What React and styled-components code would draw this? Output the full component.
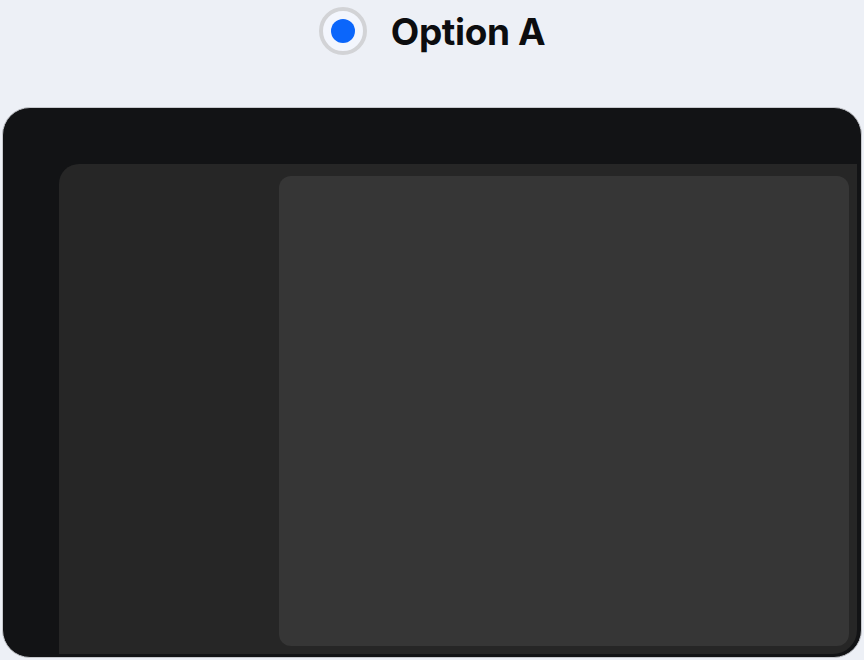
import React from "react";
import styled, { createGlobalStyle } from "styled-components";

const GlobalStyle = createGlobalStyle`
  html, body {
    margin: 0;
    padding: 0;
    background: #edf0f6;
    font-family: Inter, "Noto Sans", sans-serif;
  }
`;

function App() {
  return (
    <>
      <GlobalStyle />
      <Page>
        <Header>
          <Radio>
            <Dot />
          </Radio>
          <Label>Option A</Label>
        </Header>
        <Frame>
          <Window>
            <Pane />
          </Window>
        </Frame>
      </Page>
    </>
  );
}

const Page = styled.div`
  width: 864px;
  height: 660px;
  display: flex;
  flex-direction: column;
  overflow: hidden;
`;

const Header = styled.div`
  height: 62px;
  display: flex;
  align-items: center;
  justify-content: center;
  gap: 24px;
  margin-bottom: 45px;
`;

const Radio = styled.div`
  width: 40px;
  height: 40px;
  border-radius: 50%;
  border: 4px solid #d2d3d6;
  background: #f3f6fd;
  display: flex;
  align-items: center;
  justify-content: center;
`;

const Dot = styled.div`
  width: 24px;
  height: 24px;
  border-radius: 50%;
  background: #0b66fb;
`;

const Label = styled.div`
  font-size: 37px;
  font-weight: 700;
  letter-spacing: -0.4px;
  color: #0c0d0f;
`;

const Frame = styled.div`
  margin: 0 2px;
  height: 551px;
  box-sizing: border-box;
  border: 1px solid #c6c8cd;
  border-radius: 28px;
  background: #121315;
  padding: 56px 4px 3px 56px;
  overflow: hidden;
  display: flex;
`;

const Window = styled.div`
  flex: 1;
  background: #262626;
  border-radius: 20px 0 24px 0;
  padding: 12px 8px 8px 220px;
  display: flex;
`;

const Pane = styled.div`
  flex: 1;
  background: #363636;
  border-radius: 12px;
`;

export default App;
